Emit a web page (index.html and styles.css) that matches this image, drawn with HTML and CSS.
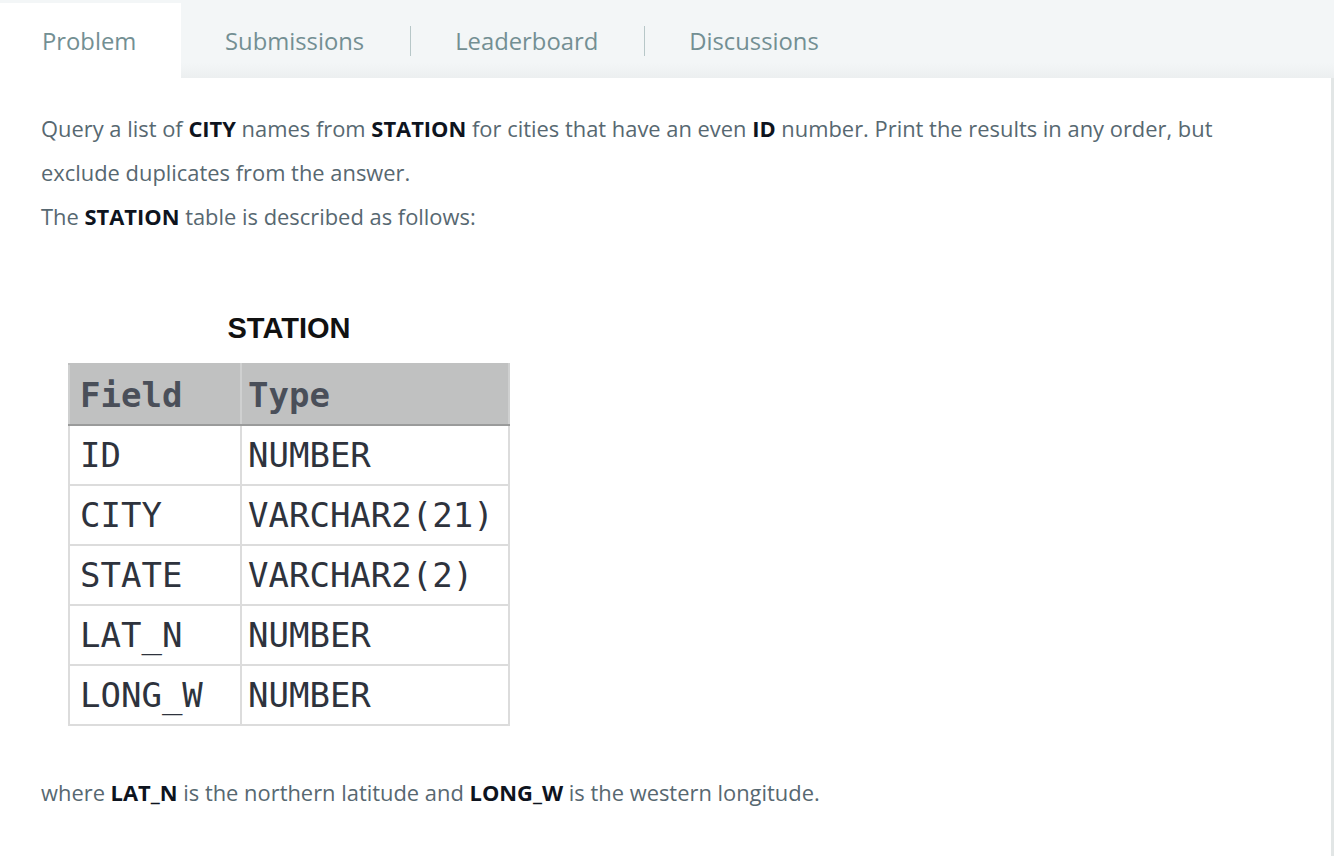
FILE: index.html
```html
<!DOCTYPE html>
<html>
<head>
<meta charset="utf-8">
<link rel="stylesheet" href="styles.css">
</head>
<body>
<div class="tabs">
  <div class="tab active">Problem</div>
  <div class="tab">Submissions</div>
  <div class="sep"></div>
  <div class="tab">Leaderboard</div>
  <div class="sep"></div>
  <div class="tab">Discussions</div>
</div>
<div class="panel">
  <p class="text">Query a list of <strong>CITY</strong> names from <strong>STATION</strong> for cities that have an even <strong>ID</strong> number. Print the results in any order, but exclude duplicates from the answer.</p>
  <p class="text">The <strong>STATION</strong> table is described as follows:</p>
  <div class="figure">
    <div class="fig-title">STATION</div>
    <table class="station">
      <thead>
        <tr><th class="c1">Field</th><th>Type</th></tr>
      </thead>
      <tbody>
        <tr><td class="c1">ID</td><td>NUMBER</td></tr>
        <tr><td class="c1">CITY</td><td>VARCHAR2(21)</td></tr>
        <tr><td class="c1">STATE</td><td>VARCHAR2(2)</td></tr>
        <tr><td class="c1">LAT_N</td><td>NUMBER</td></tr>
        <tr><td class="c1">LONG_W</td><td>NUMBER</td></tr>
      </tbody>
    </table>
  </div>
  <p class="text where">where <strong>LAT_N</strong> is the northern latitude and <strong>LONG_W</strong> is the western longitude.</p>
</div>
</body>
</html>
```

FILE: styles.css
```css
html, body {
  margin: 0;
  padding: 0;
}
body {
  background: #f3f6f7;
  font-family: "Open Sans", "Liberation Sans", sans-serif;
  overflow: hidden;
  height: 856px;
}
.tabs {
  display: flex;
  align-items: center;
  height: 75px;
  padding-top: 3px;
  background: linear-gradient(#f3f6f7 0%, #f3f6f7 80%, #eceff0 100%);
}
.tab {
  height: 75px;
  display: flex;
  align-items: center;
  font-size: 23.8px;
  color: #738f93;
  padding: 0 46px 0 44px;
}
.tab.active {
  background: #fff;
  padding: 0 0 0 42px;
  width: 139px;
}
.sep {
  width: 1px;
  height: 30px;
  background: #b7c7c8;
}
.panel {
  background: #fff;
  width: 1331px;
  height: 778px;
  box-shadow: 3px 0 0 #e2e6e6;
  overflow: hidden;
  box-sizing: border-box;
  padding-top: 29px;
}
.text {
  margin: 0;
  padding: 0 41px;
  font-size: 21.9px;
  line-height: 44px;
  color: #576871;
  max-width: 1200px;
}
.text strong {
  color: #0e141e;
  font-weight: 700;
}
.figure {
  margin: 73px 0 0 68px;
  width: 442px;
}
.fig-title {
  text-align: center;
  font-family: "Liberation Sans", Arial, sans-serif;
  font-weight: 700;
  font-size: 29px;
  color: #111;
  line-height: 32px;
  margin-bottom: 19px;
}
.station {
  border-collapse: collapse;
  width: 442px;
  font-family: "DejaVu Sans Mono", monospace;
  font-size: 34px;
}
.station th, .station td {
  border: 2px solid #dcdcdc;
  height: 58px;
  padding: 0 0 0 6px;
  text-align: left;
  color: #2e333d;
  font-weight: 400;
  line-height: 58px;
}
.station th {
  background: #c0c1c1;
  color: #4a4f59;
  font-weight: 700;
  border-color: #c0c1c1 #cfd0d0 #9a9b9b #cfd0d0;
  height: 59px;
}
.station .c1 {
  width: 160px;
  padding-left: 10px;
}
.where {
  margin-top: 45px;
}
```
